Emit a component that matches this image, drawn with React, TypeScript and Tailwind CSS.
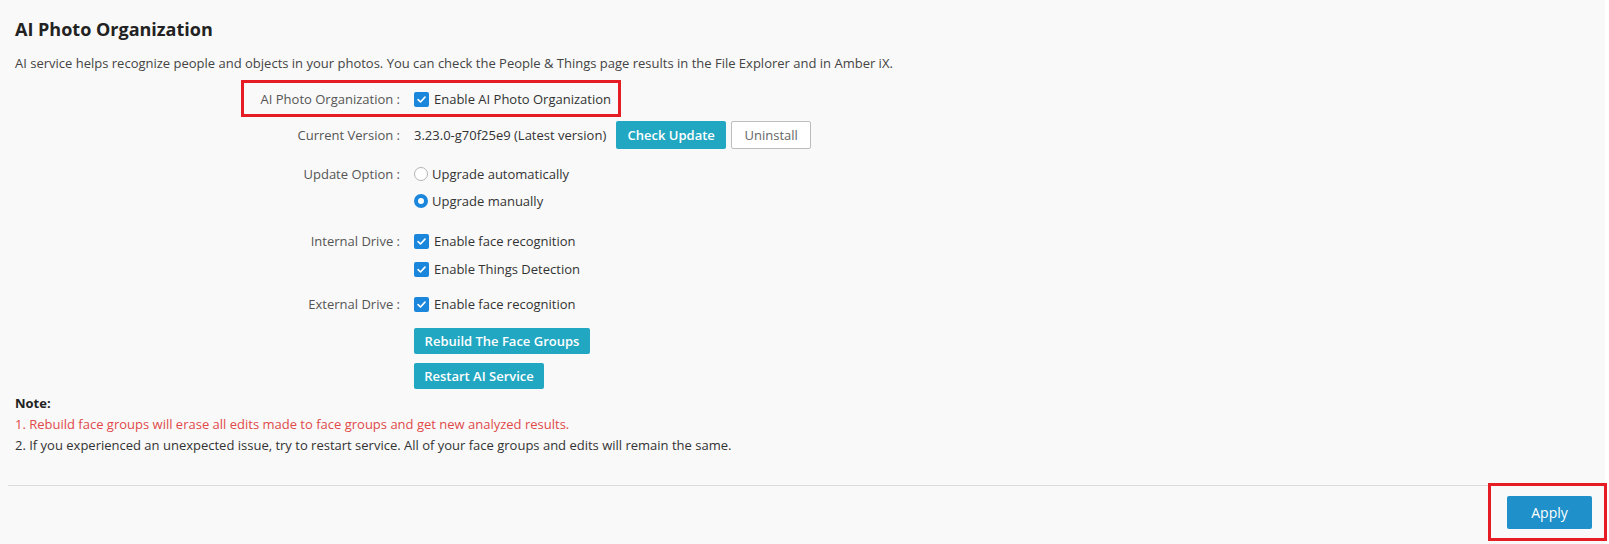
import React from 'react';

const Check: React.FC = () => (
  <span className="w-[15px] h-[15px] rounded-[2px] bg-[#1a86dc] flex items-center justify-center shrink-0">
    <svg width="11" height="11" viewBox="0 0 12 12" fill="none">
      <path d="M2.3 6.2 L4.9 8.7 L9.8 3.4" stroke="white" strokeWidth="1.8" strokeLinecap="round" strokeLinejoin="round" />
    </svg>
  </span>
);

const Radio: React.FC<{ on?: boolean }> = ({ on }) =>
  on ? (
    <span className="w-[14px] h-[14px] rounded-full border-[4px] border-[#1a86dc] bg-white shrink-0" />
  ) : (
    <span className="w-[14px] h-[14px] rounded-full border border-[#b4b4b4] bg-white shrink-0" />
  );

const Row: React.FC<{ label?: string; className?: string; children: React.ReactNode }> = ({ label, className, children }) => (
  <div className={`flex items-center ${className ?? ''}`}>
    <div className="w-[399px] shrink-0 text-right text-[#555] pr-[14px]">{label}</div>
    <div className="flex items-center">{children}</div>
  </div>
);

const App: React.FC = () => {
  return (
    <div className="w-[1609px] h-[544px] bg-white flex font-['Open_Sans',sans-serif] text-[13px] leading-[20px] text-[#333]">
      <div className="w-[1605px] bg-[#f9f9f9] flex flex-col">
        <div className="px-[15px] pt-[17px]">
          <h1 className="text-[18px] leading-[24px] font-bold text-[#222]">AI Photo Organization</h1>
          <p className="mt-[13px] leading-[18px] text-[#444]">
            AI service helps recognize people and objects in your photos. You can check the People &amp; Things page results in the File Explorer and in Amber iX.
          </p>
        </div>

        <div className="pl-[15px] mt-[9px]">
          <div className="relative">
            <div className="absolute left-[226px] top-[-1px] w-[380px] h-[37px] border-[3px] border-[#e51c23]" />
            <Row label="AI Photo Organization :" className="h-[36px]">
              <Check />
              <span className="ml-[5px]">Enable AI Photo Organization</span>
            </Row>
          </div>

          <Row label="Current Version :" className="h-[28px] mt-[4px]">
            <span>3.23.0-g70f25e9 (Latest version)</span>
            <button className="ml-[10px] h-[28px] w-[110px] rounded-[2px] bg-[#22a7c2] text-white font-semibold">Check Update</button>
            <button className="ml-[5px] h-[28px] w-[80px] rounded-[2px] bg-white border border-[#bdbdbd] text-[#666]">Uninstall</button>
          </Row>

          <Row label="Update Option :" className="h-[20px] mt-[15px]">
            <Radio />
            <span className="ml-[4px]">Upgrade automatically</span>
          </Row>
          <Row className="h-[20px] mt-[7px]">
            <Radio on />
            <span className="ml-[4px]">Upgrade manually</span>
          </Row>

          <Row label="Internal Drive :" className="h-[20px] mt-[20px]">
            <Check />
            <span className="ml-[5px]">Enable face recognition</span>
          </Row>
          <Row className="h-[20px] mt-[8px]">
            <Check />
            <span className="ml-[5px]">Enable Things Detection</span>
          </Row>

          <Row label="External Drive :" className="h-[20px] mt-[15px]">
            <Check />
            <span className="ml-[5px]">Enable face recognition</span>
          </Row>

          <Row className="mt-[14px]">
            <button className="h-[26px] w-[176px] rounded-[2px] bg-[#22a7c2] text-white font-semibold">Rebuild The Face Groups</button>
          </Row>
          <Row className="mt-[9px]">
            <button className="h-[26px] w-[130px] rounded-[2px] bg-[#22a7c2] text-white font-semibold">Restart AI Service</button>
          </Row>
        </div>

        <div className="px-[15px] mt-[4px]">
          <div className="font-bold text-[#222]">Note:</div>
          <div className="mt-[1px] text-[#e04a4a]">1. Rebuild face groups will erase all edits made to face groups and get new analyzed results.</div>
          <div className="mt-[1px]">2. If you experienced an unexpected issue, try to restart service. All of your face groups and edits will remain the same.</div>
        </div>

        <div className="ml-[8px] mt-[30px] border-t border-[#dcdcdc]" />

        <div className="flex justify-end pr-[13px] pt-[10px]">
          <div className="relative">
            <div className="absolute left-[-19px] top-[-13px] w-[119px] h-[58px] border-[3px] border-[#e51c23]" />
            <button className="h-[33px] w-[85px] rounded-[2px] bg-[#1f90ca] text-white text-[14px]">Apply</button>
          </div>
        </div>
      </div>
    </div>
  );
};

export default App;
